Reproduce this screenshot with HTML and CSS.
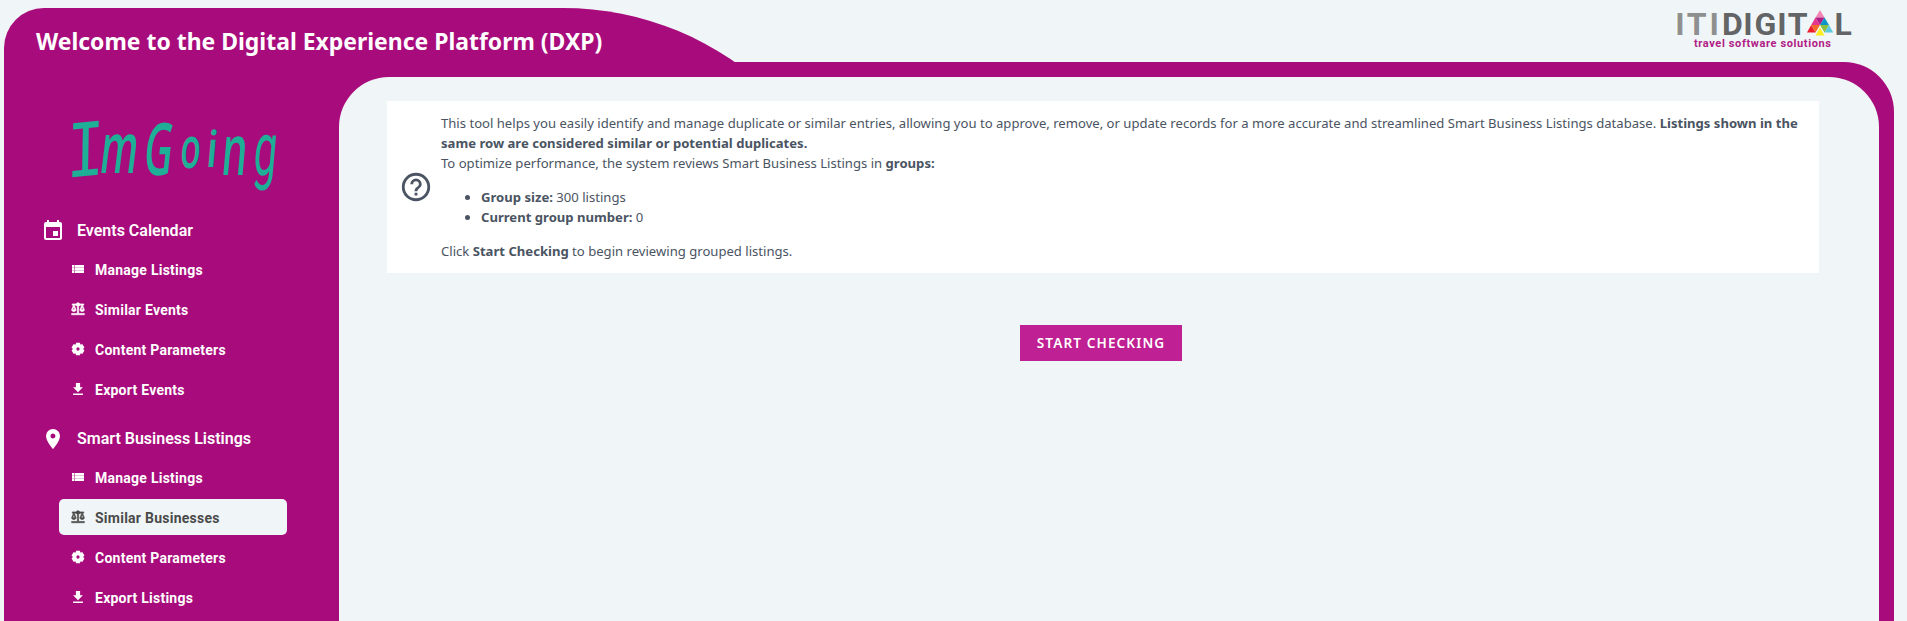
FILE: index.html
```html
<!DOCTYPE html>
<html lang="en">

<head>
    <meta charset="UTF-8">
    <meta name="viewport" content="width=device-width, initial-scale=1.0">
    <title>Digital Experience Platform</title>
    <link rel="stylesheet" href="styles.css">
</head>

<body>
    <!-- Shared icon shapes -->
    <svg class="sprite" aria-hidden="true">
        <symbol id="icon-list" viewBox="0 0 14 14">
            <path d="M1 3h2.500v2.400H1zM4 3h9v2.400H4zM1 5.800h2.500v2.400H1zM4 5.800h9v2.400H4zM1 8.600h2.500V11H1zM4 8.600h9V11H4z" />
        </symbol>
        <symbol id="icon-scale" viewBox="1 1 22 22">
            <path stroke="currentColor" stroke-width="1" d="M13 7.800c.8-.3 1.500-1 1.800-1.800H18l-3 7c0 1.700 1.600 3 3.500 3s3.500-1.300 3.500-3l-3-7h2V4h-6.200a3 3 0 0 0-5.600 0H3v2h2l-3 7c0 1.700 1.600 3 3.500 3S9 14.700 9 13L6 6h3.200c.3.800 1 1.500 1.800 1.800V19H2v2h20v-2h-9zM20.400 13h-3.800l1.900-4.500zm-13 0H3.600l1.900-4.500z" />
        </symbol>
        <symbol id="icon-gear" viewBox="1 1 22 22">
            <path fill-rule="evenodd" d="M9 2h6l.8 3 3.300-.6 3 5.200L20 12l2.100 2.400-3 5.200-3.300-.6L15 22H9l-.8-3-3.300.6-3-5.200L4 12 1.900 9.600l3-5.200 3.300.6zM12 9.400a2.600 2.600 0 1 0 0 5.200 2.600 2.600 0 0 0 0-5.200z" />
        </symbol>
        <symbol id="icon-download" viewBox="2 1.500 20 20">
            <path d="M19 9h-4V3H9v6H5l7 7zM5 18v2h14v-2z" />
        </symbol>
    </svg>

    <header class="header">
        <div class="header-tab">
            <h1>Welcome to the Digital Experience Platform (DXP)</h1>
        </div>
        <svg class="brand" viewBox="0 0 180 44" role="img" aria-label="ITI Digital">
            <text class="brand-light" x="0.300 11.800 34.500" y="27">ITI</text>
            <text class="brand-dark" x="47 68.300 79.500 102.300 112.800" y="27">DIGIT</text>
            <g transform="translate(132 2)">
                <path fill="#f386b5" d="M13 0l4.500 7.500h-9z" />
                <path fill="#e5368f" d="M8.500 7.500L13 15H4.200z" />
                <path fill="#b01c86" d="M8.500 7.500h9L13 15z" />
                <path fill="#0d94c9" d="M17.500 7.500L22 15h-9z" />
                <path fill="#ec1c2e" d="M4.200 15l4.300 7.500H0z" />
                <path fill="#f26a2a" d="M4.200 15H13l-4.500 7.500z" />
                <path fill="#8bbf3f" d="M13 15h9l-4.500 7.500z" />
                <path fill="#5ec9e2" d="M22 15l4.200 7.500h-8.700z" />
                <path fill="#fbed21" d="M13 17.500l4.500 8h-9z" />
            </g>
            <text class="brand-dark" x="159.500" y="27">L</text>
            <text class="brand-tagline" x="19" y="39" textLength="137">travel software solutions</text>
        </svg>
    </header>

    <div class="frame">
        <aside class="sidebar">
            <svg class="client-logo" viewBox="0 0 220 90" role="img" aria-label="ImGoing">
                <text class="logo-serif" transform="translate(1 68) rotate(-6) skewX(-7) scale(1.450 1.850)">I</text>
                <text transform="translate(33 63) skewX(-7) scale(.9 1.600)">m</text>
                <text transform="translate(77 65) skewX(-6) scale(.9 1.650)">G</text>
                <text transform="translate(114 58) skewX(-5) scale(.76 1.300)">o</text>
                <text transform="translate(140 57) skewX(-5) scale(.95 1.150)">i</text>
                <text transform="translate(155 65) skewX(-5) scale(.92 1.600)">n</text>
                <text class="logo-tail" transform="translate(187 65) skewX(-5) scale(.95 1.700)">g</text>
            </svg>

            <nav class="menu">
                <section class="menu-group">
                    <h2>
                        <svg viewBox="0 0 24 24"><path d="M19 3h-1V1h-2v2H8V1H6v2H5a2 2 0 0 0-2 2v14c0 1.100.9 2 2 2h14c1.100 0 2-.9 2-2V5c0-1.100-.9-2-2-2zm0 16H5V8h14zm-7-7h5v5h-5z" /></svg>
                        Events Calendar
                    </h2>
                    <a href="#"><svg><use href="#icon-list" /></svg>Manage Listings</a>
                    <a href="#"><svg><use href="#icon-scale" /></svg>Similar Events</a>
                    <a href="#"><svg><use href="#icon-gear" /></svg>Content Parameters</a>
                    <a href="#"><svg><use href="#icon-download" /></svg>Export Events</a>
                </section>
                <section class="menu-group">
                    <h2>
                        <svg viewBox="0 0 24 24"><path d="M12 2a7 7 0 0 0-7 7c0 5.250 7 13 7 13s7-7.750 7-13a7 7 0 0 0-7-7zm0 9.500a2.500 2.500 0 1 1 0-5 2.500 2.500 0 0 1 0 5z" /></svg>
                        Smart Business Listings
                    </h2>
                    <a href="#"><svg><use href="#icon-list" /></svg>Manage Listings</a>
                    <a href="#" class="active"><svg><use href="#icon-scale" /></svg>Similar Businesses</a>
                    <a href="#"><svg><use href="#icon-gear" /></svg>Content Parameters</a>
                    <a href="#"><svg><use href="#icon-download" /></svg>Export Listings</a>
                </section>
            </nav>
        </aside>

        <main class="content">
            <div class="info">
                <svg class="info-icon" viewBox="0 0 24 24"><path d="M11 18h2v-2h-2zm1-16a10 10 0 1 0 0 20 10 10 0 0 0 0-20zm0 18a8 8 0 1 1 0-16 8 8 0 0 1 0 16zm0-14a4 4 0 0 0-4 4h2a2 2 0 1 1 4 0c0 2-3 1.750-3 5h2c0-2.250 3-2.500 3-5a4 4 0 0 0-4-4z" /></svg>
                <div class="info-text">
                    <p>This tool helps you easily identify and manage duplicate or similar entries, allowing you to approve, remove, or update records for a more accurate and streamlined Smart Business Listings database. <b>Listings shown in the<br>same row are considered similar or potential duplicates.</b></p>
                    <p>To optimize performance, the system reviews Smart Business Listings in <b>groups:</b></p>
                    <ul>
                        <li><b>Group size:</b> 300 listings</li>
                        <li><b>Current group number:</b> 0</li>
                    </ul>
                    <p>Click <b>Start Checking</b> to begin reviewing grouped listings.</p>
                </div>
            </div>
            <button type="button">START CHECKING</button>
        </main>
    </div>
</body>

</html>
```

FILE: styles.css
```css
* {
    padding: 0;
    margin: 0;
    box-sizing: border-box;
}

body {
    height: 100vh;
    padding: 0 13px 0 4px;
    display: flex;
    flex-direction: column;
    overflow: hidden;
    background-color: #f0f6f7;
    color: #4a5462;
    font-family: "Segoe UI", "Noto Sans", sans-serif;
    font-size: 13.1px;
}

.sprite {
    display: none;
}

/* Header */
.header {
    height: 62px;
    flex: none;
    display: flex;
    justify-content: space-between;
    align-items: flex-start;
    padding-top: 8px;
    overflow: hidden;
}

/* Taller than the header so only the top of the round corner shows */
.header-tab {
    width: 859px;
    height: 320px;
    padding: 17px 32px;
    border-radius: 40px 300px 0 0;
    background-color: #a80b7b;
    color: white;
}

.header-tab h1 {
    font-size: 22.95px;
    line-height: 32px;
    white-space: nowrap;
}

.brand {
    width: 180px;
    height: 44px;
    margin-right: 39px;
    overflow: visible;
}

.brand text {
    font-family: Roboto, sans-serif;
    font-size: 32px;
}

.brand .brand-light {
    fill: #8f8f8f;
    font-weight: 700;
}

.brand .brand-dark {
    fill: #636466;
    font-weight: 700;
}

.brand .brand-tagline {
    fill: #b01c86;
    font-size: 11px;
    font-weight: 700;
}

/* Frame */
.frame {
    flex: 1;
    display: flex;
    padding: 15px 15px 0 0;
    border-radius: 0 50px 0 0;
    background-color: #a80b7b;
}

.sidebar {
    width: 335px;
    flex: none;
    padding-top: 33px;
    font-family: Roboto, sans-serif;
    color: white;
}

.client-logo {
    display: block;
    width: 220px;
    height: 90px;
    margin-left: 61px;
    overflow: visible;
}

.client-logo text {
    fill: #1fae96;
    font-family: "Open Sans", sans-serif;
    font-size: 44px;
    font-weight: 600;
}

.client-logo .logo-serif {
    font-family: "Liberation Mono", monospace;
    font-weight: 400;
}

.client-logo .logo-tail {
    font-family: Roboto, sans-serif;
    font-weight: 400;
}

.menu {
    padding: 11px 52px 0 37px;
}

.menu-group {
    display: flex;
    flex-direction: column;
    gap: 4px;
    margin-bottom: 12px;
}

.menu-group h2 {
    height: 36px;
    display: flex;
    align-items: center;
    gap: 12px;
    padding-top: 2px;
    font-size: 16px;
    font-weight: 600;
}

.menu-group h2 svg {
    width: 24px;
    height: 24px;
    margin-top: 2px;
    fill: currentColor;
}

.menu-group a {
    height: 36px;
    margin-left: 18px;
    padding: 2px 0 0 12px;
    display: flex;
    align-items: center;
    gap: 10px;
    border-radius: 5px;
    color: white;
    font-size: 14px;
    font-weight: 700;
    letter-spacing: 0.25px;
    text-decoration: none;
}

.menu-group a svg {
    width: 14px;
    height: 14px;
    margin-bottom: 2px;
    fill: currentColor;
}

.menu-group a.active {
    background-color: #f0f6f7;
    color: #4a4a4a;
}

/* Content */
.content {
    flex: 1;
    display: flex;
    flex-direction: column;
    align-items: center;
    gap: 52px;
    padding: 24px 60px 0 48px;
    border-radius: 50px 50px 0 0;
    background-color: #f0f6f7;
}

.info {
    width: 100%;
    display: flex;
    align-items: center;
    gap: 8px;
    padding: 12px;
    background-color: white;
}

.info-icon {
    width: 34px;
    height: 34px;
    flex: none;
    fill: currentColor;
}

.info-text {
    line-height: 20px;
    white-space: nowrap;
}

.info-text ul {
    margin: 14px 0;
    padding-left: 40px;
}

button {
    width: 162px;
    height: 36px;
    margin-right: 4px;
    padding-bottom: 1px;
    border: none;
    background-color: #bf2093;
    color: white;
    font-family: "Segoe UI", "Noto Sans", sans-serif;
    font-size: 13.6px;
    font-weight: 600;
    letter-spacing: 1.1px;
}

button:hover {
    background-color: #a80b7b;
    cursor: pointer;
}
```
